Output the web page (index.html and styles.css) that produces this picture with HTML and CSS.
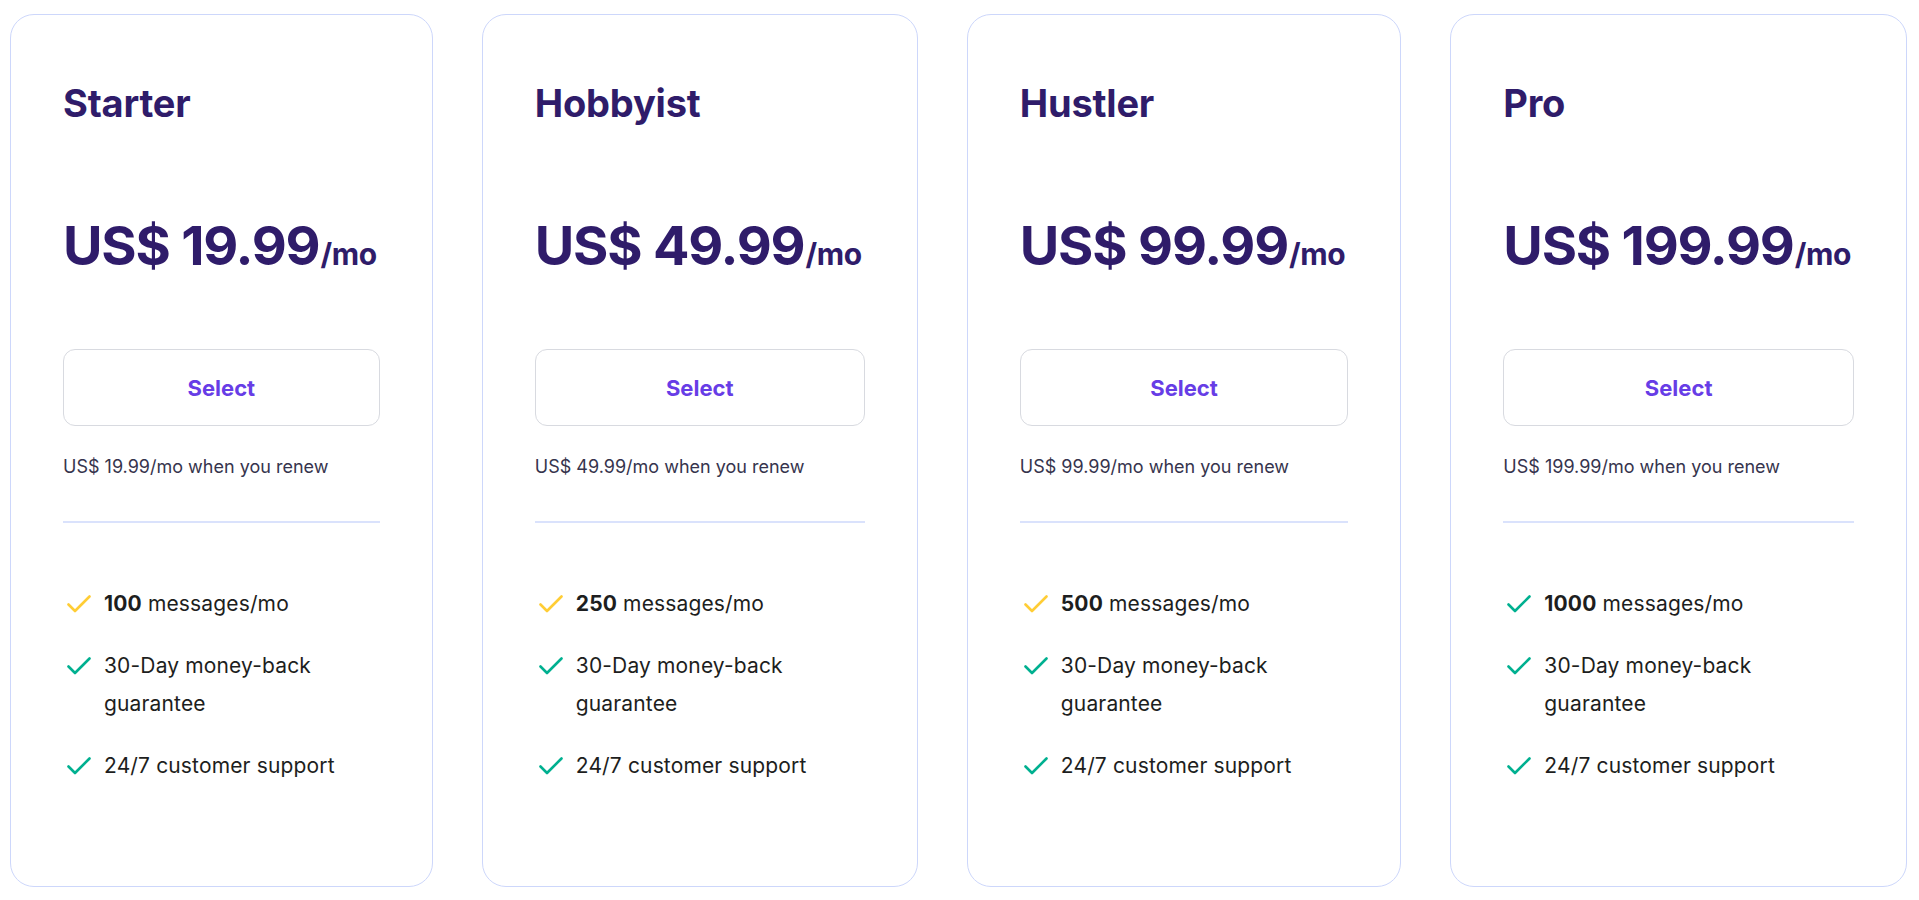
FILE: index.html
```html
<!DOCTYPE html>
<html lang="en">
<head>
<meta charset="utf-8">
<title>Pricing</title>
<link rel="stylesheet" href="styles.css">
</head>
<body>
<main class="plans">
  <section class="card">
    <h2 class="title">Starter</h2>
    <div class="price">US$ 19.99<span class="per">/mo</span></div>
    <button class="select">Select</button>
    <p class="renew">US$ 19.99/mo when you renew</p>
    <hr class="divider">
    <ul class="features">
      <li><svg class="check yellow" viewBox="0 0 24 18"><polyline points="1.5,9.5 8,16 22.5,1.5"/></svg><span><b>100</b> messages/mo</span></li>
      <li><svg class="check green" viewBox="0 0 24 18"><polyline points="1.5,9.5 8,16 22.5,1.5"/></svg><span>30-Day money-back<br>guarantee</span></li>
      <li><svg class="check green" viewBox="0 0 24 18"><polyline points="1.5,9.5 8,16 22.5,1.5"/></svg><span>24/7 customer support</span></li>
    </ul>
  </section>
  <section class="card">
    <h2 class="title">Hobbyist</h2>
    <div class="price">US$ 49.99<span class="per">/mo</span></div>
    <button class="select">Select</button>
    <p class="renew">US$ 49.99/mo when you renew</p>
    <hr class="divider">
    <ul class="features">
      <li><svg class="check yellow" viewBox="0 0 24 18"><polyline points="1.5,9.5 8,16 22.5,1.5"/></svg><span><b>250</b> messages/mo</span></li>
      <li><svg class="check green" viewBox="0 0 24 18"><polyline points="1.5,9.5 8,16 22.5,1.5"/></svg><span>30-Day money-back<br>guarantee</span></li>
      <li><svg class="check green" viewBox="0 0 24 18"><polyline points="1.5,9.5 8,16 22.5,1.5"/></svg><span>24/7 customer support</span></li>
    </ul>
  </section>
  <section class="card">
    <h2 class="title">Hustler</h2>
    <div class="price">US$ 99.99<span class="per">/mo</span></div>
    <button class="select">Select</button>
    <p class="renew">US$ 99.99/mo when you renew</p>
    <hr class="divider">
    <ul class="features">
      <li><svg class="check yellow" viewBox="0 0 24 18"><polyline points="1.5,9.5 8,16 22.5,1.5"/></svg><span><b>500</b> messages/mo</span></li>
      <li><svg class="check green" viewBox="0 0 24 18"><polyline points="1.5,9.5 8,16 22.5,1.5"/></svg><span>30-Day money-back<br>guarantee</span></li>
      <li><svg class="check green" viewBox="0 0 24 18"><polyline points="1.5,9.5 8,16 22.5,1.5"/></svg><span>24/7 customer support</span></li>
    </ul>
  </section>
  <section class="card">
    <h2 class="title">Pro</h2>
    <div class="price">US$ 199.99<span class="per">/mo</span></div>
    <button class="select">Select</button>
    <p class="renew">US$ 199.99/mo when you renew</p>
    <hr class="divider">
    <ul class="features">
      <li><svg class="check green" viewBox="0 0 24 18"><polyline points="1.5,9.5 8,16 22.5,1.5"/></svg><span><b>1000</b> messages/mo</span></li>
      <li><svg class="check green" viewBox="0 0 24 18"><polyline points="1.5,9.5 8,16 22.5,1.5"/></svg><span>30-Day money-back<br>guarantee</span></li>
      <li><svg class="check green" viewBox="0 0 24 18"><polyline points="1.5,9.5 8,16 22.5,1.5"/></svg><span>24/7 customer support</span></li>
    </ul>
  </section>
</main>
</body>
</html>
```
FILE: styles.css
```css
* { box-sizing: border-box; }
html, body { margin: 0; padding: 0; background: #ffffff; }
body {
  font-family: "Inter", "Noto Sans", "Liberation Sans", sans-serif;
  color: #1d1e20;
}
.plans {
  display: flex;
  gap: 49px;
  padding: 14px 12px 0 10px;
  align-items: stretch;
}
.card {
  flex: 1 1 auto;
  min-width: 0;
  border: 1px solid #cdd7fb;
  border-radius: 24px;
  padding: 66px 52px 101px 52px;
  display: flex;
  flex-direction: column;
  background: #fff;
}
.title {
  margin: 0;
  font-size: 38px;
  line-height: 44px;
  font-weight: 700;
  color: #2f1c6a;
  letter-spacing: -0.2px;
}
.price {
  margin-top: 89px;
  font-size: 54px;
  line-height: 64px;
  font-weight: 700;
  color: #2f1c6a;
  white-space: nowrap;
  letter-spacing: -1.2px;
}
.per {
  font-size: 30px;
  letter-spacing: -0.4px;
  margin-left: 1px;
}
.select {
  margin-top: 63px;
  height: 77px;
  width: 100%;
  border: 1.5px solid #d8dae0;
  border-radius: 12px;
  background: #fff;
  color: #673de6;
  font-family: inherit;
  font-size: 22px;
  font-weight: 700;
  cursor: pointer;
}
.renew {
  margin: 29px 0 0 0;
  font-size: 18px;
  line-height: 24px;
  color: #36344d;
}
.divider {
  margin: 42px 0 0 0;
  border: 0;
  border-top: 2px solid #dae2fc;
  height: 0;
}
.features {
  list-style: none;
  margin: 62px 0 0 0;
  padding: 0 0 0 4px;
  display: flex;
  flex-direction: column;
  gap: 24px;
}
.features li {
  display: flex;
  align-items: flex-start;
  gap: 13px;
  font-size: 21px;
  line-height: 38px;
  letter-spacing: 0.15px;
  color: #1d1e20;
}
.features b { font-weight: 700; }
.check {
  flex: none;
  width: 24px;
  height: 18px;
  margin-top: 10px;
  fill: none;
  stroke-width: 2.6;
  stroke-linecap: round;
  stroke-linejoin: round;
}
.check.yellow { stroke: #ffcd35; }
.check.green { stroke: #00b090; }
```
